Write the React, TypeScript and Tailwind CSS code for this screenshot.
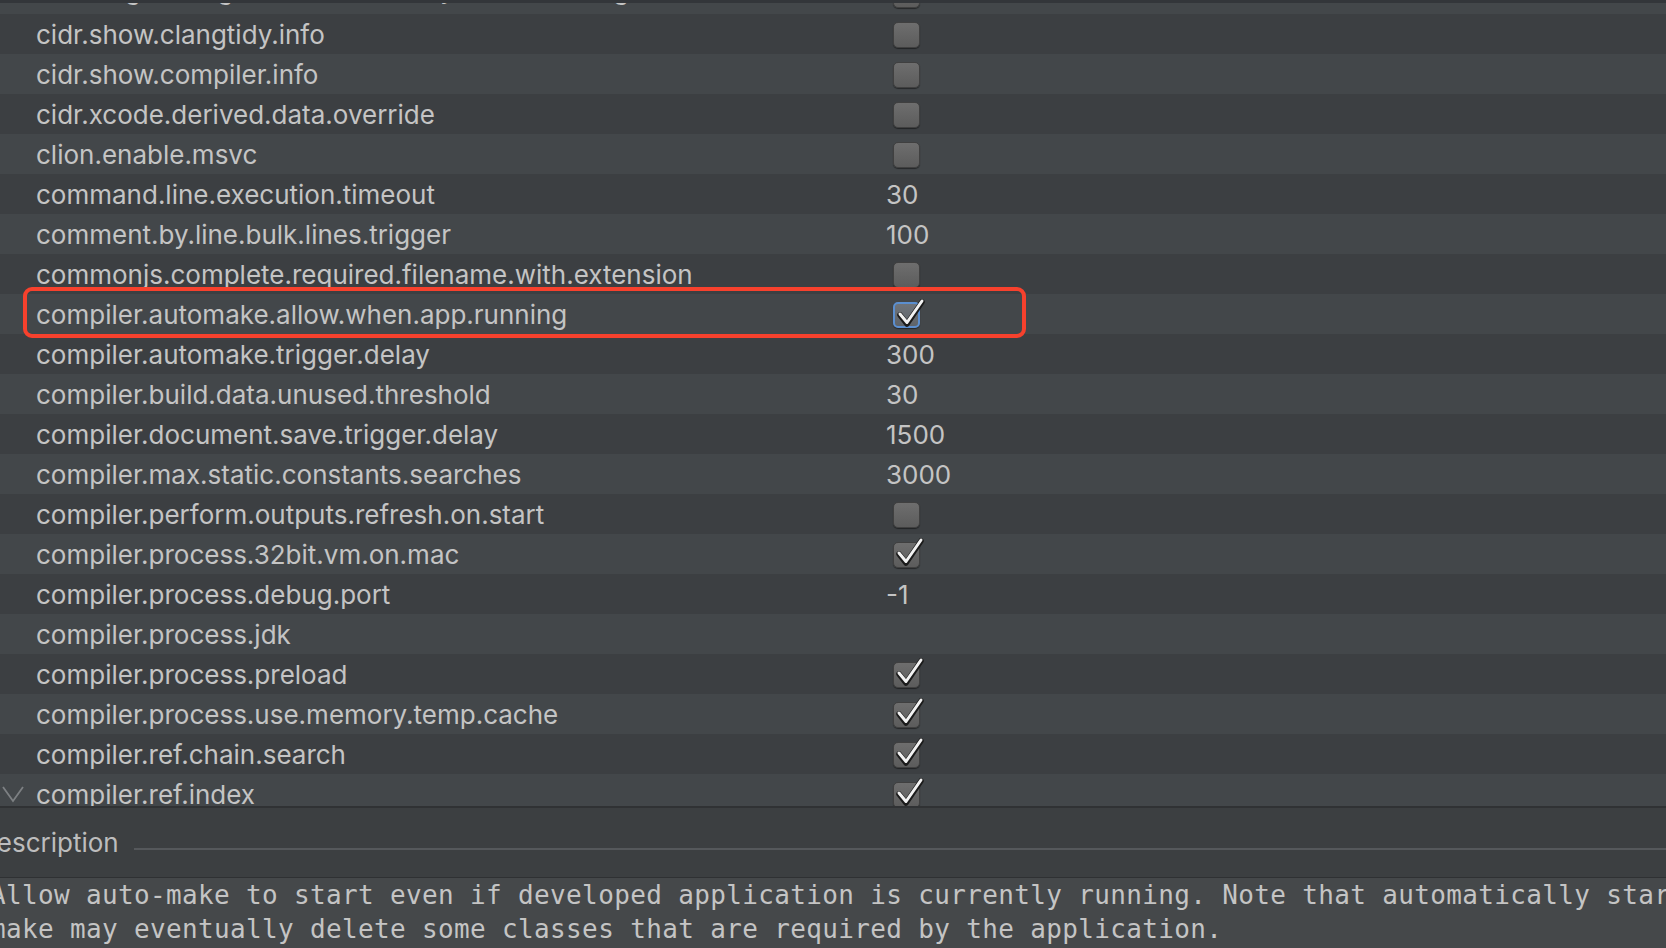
import React from "react";

type Row = {
    name: string;
    value?: string;
    check?: boolean;
    checked?: boolean;
};

const rows: Row[] = [
    { name: "cidr.lang.code.goto.declaration.by.default.timing", check: true },
    { name: "cidr.show.clangtidy.info", check: true },
    { name: "cidr.show.compiler.info", check: true },
    { name: "cidr.xcode.derived.data.override", check: true },
    { name: "clion.enable.msvc", check: true },
    { name: "command.line.execution.timeout", value: "30" },
    { name: "comment.by.line.bulk.lines.trigger", value: "100" },
    { name: "commonjs.complete.required.filename.with.extension", check: true },
    { name: "compiler.automake.allow.when.app.running", check: true, checked: true },
    { name: "compiler.automake.trigger.delay", value: "300" },
    { name: "compiler.build.data.unused.threshold", value: "30" },
    { name: "compiler.document.save.trigger.delay", value: "1500" },
    { name: "compiler.max.static.constants.searches", value: "3000" },
    { name: "compiler.perform.outputs.refresh.on.start", check: true },
    { name: "compiler.process.32bit.vm.on.mac", check: true, checked: true },
    { name: "compiler.process.debug.port", value: "-1" },
    { name: "compiler.process.jdk" },
    { name: "compiler.process.preload", check: true, checked: true },
    { name: "compiler.process.use.memory.temp.cache", check: true, checked: true },
    { name: "compiler.ref.chain.search", check: true, checked: true },
    { name: "compiler.ref.index", check: true, checked: true },
];

const SELECTED = 8;

function Checkbox({ checked, focused }: { checked?: boolean; focused?: boolean }) {
    return (
        <div
            className={`relative ml-[7px] w-[27px] h-[26px] rounded-[5px] shadow-[0_1px_1px_rgba(0,0,0,0.45)] ${
                focused
                    ? "border-2 border-[#5b8fd0] bg-linear-to-b from-[#6f747a] to-[#5f646a]"
                    : "border border-[#404040] bg-linear-to-b from-[#6e6e6e] to-[#5c5c5c]"
            }`}
        >
            {checked && (
                <svg
                    className="absolute left-[-1px] top-[-5px] overflow-visible"
                    width="32"
                    height="32"
                    viewBox="0 0 32 32"
                    fill="none"
                >
                    <path d="M6 16 L13 25 L28 3" stroke="#1b1b1b" strokeWidth="5.5" strokeLinecap="round" strokeLinejoin="round" />
                    <path d="M6 15 L13 23.5 L28 2" stroke="#f2f2f2" strokeWidth="3" strokeLinecap="round" strokeLinejoin="round" />
                </svg>
            )}
        </div>
    );
}

export default function App() {
    return (
        <div
            className="w-[1666px] h-[948px] overflow-hidden bg-[#3c3f41] flex flex-col text-[#c4c4c4]"
            style={{ fontFamily: "Inter, 'Liberation Sans', sans-serif" }}
        >
            <div className="relative h-[806px] shrink-0 overflow-hidden">
                <div className="-mt-[26px] flex flex-col">
                    {rows.map((r, i) => (
                        <div
                            key={r.name}
                            className={`relative flex items-center h-[40px] shrink-0 ${
                                i % 2 === 0 ? "bg-[#43474a]" : "bg-[#3c3f42]"
                            }`}
                        >
                            <div className="w-[36px] shrink-0 flex items-center justify-start pl-[2px]">
                                {i === rows.length - 1 && (
                                    <svg width="22" height="18" viewBox="0 0 22 18" fill="none">
                                        <path d="M1 2 L11 16 L21 2" stroke="#7d8083" strokeWidth="1.8" />
                                    </svg>
                                )}
                            </div>
                            <div
                                className={`w-[850px] shrink-0 text-[26px] whitespace-nowrap ${
                                    i === 0 ? "-mt-[10px]" : "pt-[1px]"
                                }`}
                            >
                                {r.name}
                            </div>
                            <div className="flex items-center pt-[1px] text-[26px]">
                                {r.check ? <Checkbox checked={r.checked} focused={i === SELECTED} /> : r.value}
                            </div>
                            {i === SELECTED && (
                                <div className="absolute z-10 left-[23px] top-[-7px] w-[1003px] h-[51px] rounded-[9px] border-[4px] border-[#f7412d]" />
                            )}
                        </div>
                    ))}
                </div>
                <div className="absolute z-20 top-0 inset-x-0 h-[3px] bg-[#33363a]" />
            </div>
            <div className="h-[2px] bg-[#303234] shrink-0" />
            <div className="h-[69px] shrink-0 flex items-center">
                <span className="ml-[-22px] text-[26px] text-[#bdbdbd] whitespace-nowrap">Description</span>
                <div className="ml-[15px] flex-1 h-[2px] bg-[#55585b] mt-[12px]" />
            </div>
            <div className="h-[1px] bg-[#2f3133] shrink-0" />
            <div
                className="flex-1 bg-[#45484a] text-[#c4c4c4] text-[26px] tracking-[0.35px] leading-[34px] whitespace-nowrap"
                style={{ fontFamily: "'DejaVu Sans Mono', 'Liberation Mono', monospace" }}
            >
                <div className="ml-[-10px]">
                    Allow auto-make to start even if developed application is currently running. Note that automatically started
                </div>
                <div className="ml-[-10px]">make may eventually delete some classes that are required by the application.</div>
            </div>
        </div>
    );
}
